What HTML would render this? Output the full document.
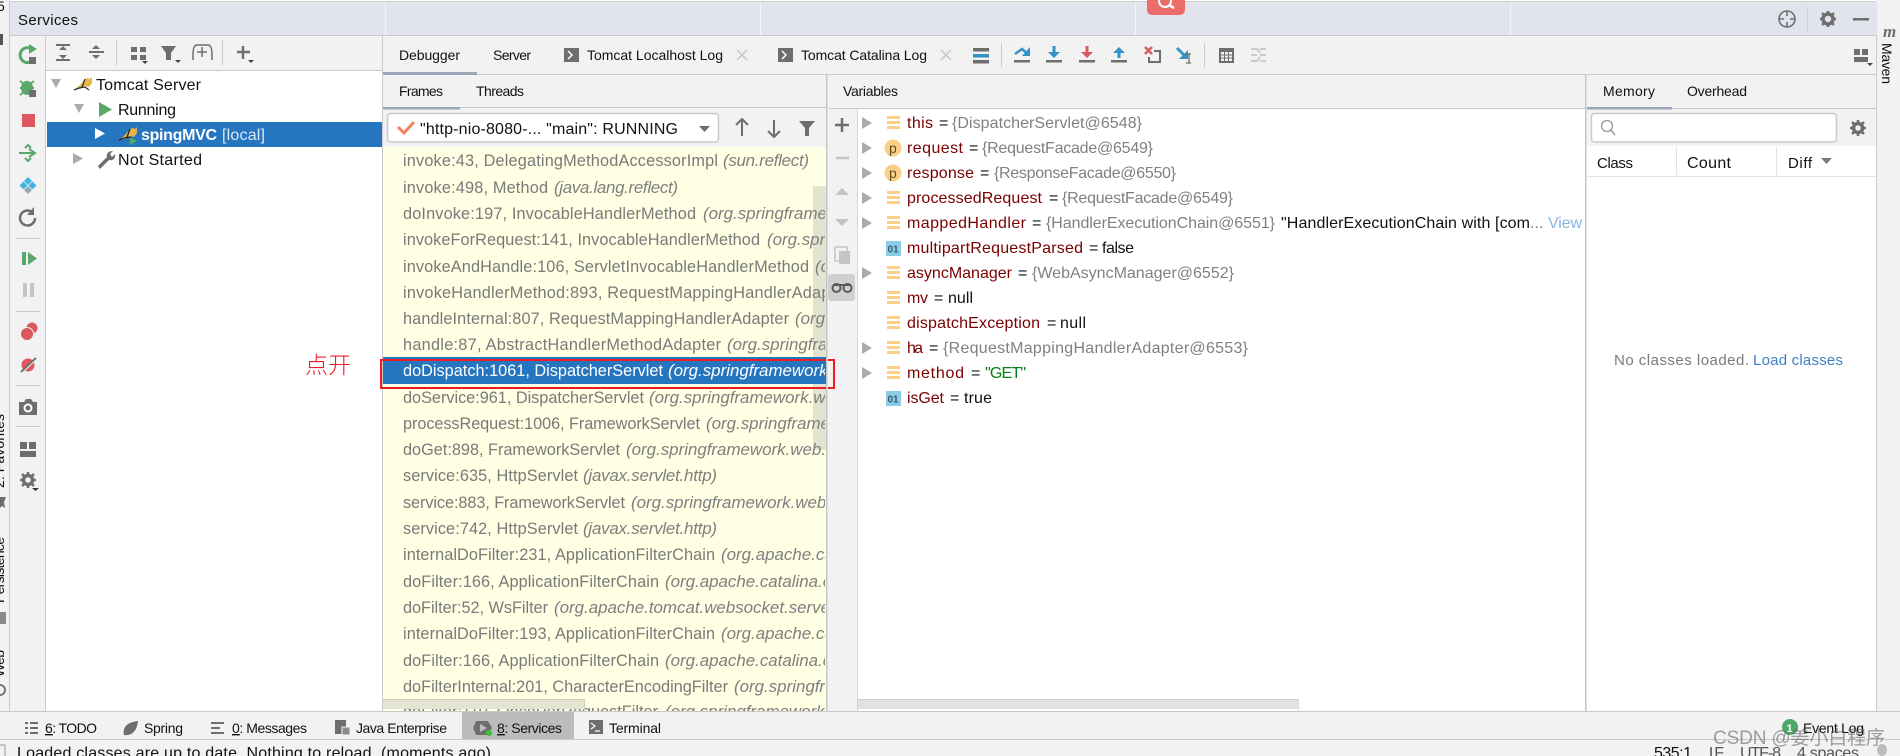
<!DOCTYPE html>
<html><head><meta charset="utf-8"><title>Services</title>
<style>
html,body{margin:0;padding:0;width:1900px;height:756px;overflow:hidden;background:#f2f2f2}
svg{display:block;filter:blur(.3px)}
text{font-family:"Liberation Sans","Noto Sans CJK SC",sans-serif;white-space:pre}
.ui{font-size:14px;fill:#111}
.t{font-size:16px;fill:#111}
.f{font-size:16.3px;fill:#7a7a7a}
.i{font-size:16.9px;fill:#7f7f7f;font-style:italic}
.n{font-size:16px;fill:#7a0000}
.g{font-size:16px;fill:#808080}
.k{font-size:16px;fill:#111}
</style></head><body>
<svg width="1900" height="756" viewBox="0 0 1900 756" xmlns="http://www.w3.org/2000/svg">
<defs>
<clipPath id="fc"><rect x="383" y="147" width="442" height="564"/></clipPath>
<clipPath id="ls"><rect x="0" y="0" width="9" height="756"/></clipPath>
</defs>
<rect width="1900" height="756" fill="#f2f2f2"/>
<!-- top -->
<rect x="10" y="0" width="1867" height="1" fill="#fff"/>
<rect x="10" y="1" width="1867" height="1" fill="#cfcfcf"/>
<rect x="10" y="2" width="1867" height="33" fill="#e1e4ec"/>
<rect x="385" y="2" width="1" height="33" fill="#f4f5f8"/>
<rect x="760" y="2" width="1" height="33" fill="#f4f5f8"/>
<rect x="1135" y="2" width="1" height="33" fill="#f4f5f8"/>
<rect x="1510" y="2" width="1" height="33" fill="#f4f5f8"/>
<rect x="10" y="35" width="1867" height="1" fill="#c9c9c9"/>
<text class="ui" x="18" y="25" textLength="60" style="font-size:15px">Services</text>
<path d="M1147 0h38v10a5 5 0 0 1-5 5h-28a5 5 0 0 1-5-5z" fill="#ec6b6b"/>
<circle cx="1165" cy="1" r="6" fill="none" stroke="#fff" stroke-width="2"/><path d="M1169 5l5 3" stroke="#fff" stroke-width="2.5"/>
<!-- top right icons -->
<circle cx="1787" cy="19" r="8" fill="none" stroke="#6e6e6e" stroke-width="1.6"/><path d="M1787 11v5M1787 22v5M1779 19h5M1790 19h5" stroke="#6e6e6e" stroke-width="1.6"/>
<rect x="1807" y="7" width="1" height="24" fill="#d0d3da"/>
<circle cx="1828" cy="19" r="5" fill="none" stroke="#6e6e6e" stroke-width="3.5"/><path d="M1828 11v3M1828 24v3M1820 19h3M1833 19h3M1822 13l2 2M1832 23l2 2M1834 13l-2 2M1824 23l-2 2" stroke="#6e6e6e" stroke-width="2.5"/>
<rect x="1853" y="18" width="16" height="2.5" fill="#6e6e6e"/>
<!-- left strip -->
<rect x="9" y="0" width="1" height="711" fill="#c9c9c9"/>
<g clip-path="url(#ls)" font-size="14" fill="#111">
<text class="ui" transform="translate(4 488) rotate(-90)" textLength="74">2: Favorites</text>
<text class="ui" transform="translate(4 603) rotate(-90)" textLength="66">Persistence</text>
<text class="ui" transform="translate(4 677) rotate(-90)" textLength="27">Web</text>
<text class="ui" x="-3" y="11">5</text>
<path d="M0 497h6l-2 5 1 6-3-2-2 2z" fill="#6e6e6e"/>
<rect x="0" y="612" width="6" height="12" fill="#8a8a8a"/>
<circle cx="0" cy="690" r="5" fill="none" stroke="#777" stroke-width="2"/>
<rect x="0" y="34" width="3" height="11" fill="#555"/>
</g>
<!-- tool strip -->
<rect x="45" y="36" width="1" height="675" fill="#c9c9c9"/>
<path d="M34 59a7.500 7.500 0 1 1-4-11" fill="none" stroke="#59a869" stroke-width="3"/>
<path d="M29 44l8 5-8 5z" fill="#59a869"/><rect x="29" y="57" width="7" height="7" fill="#6e6e6e"/>
<g fill="#59a869"><ellipse cx="27" cy="88" rx="6" ry="7"/><path d="M20 81l4 3M34 81l-4 3M20 88h5M34 88h-5M20 95l4-3" stroke="#59a869" stroke-width="2"/></g><rect x="29" y="90" width="7" height="7" fill="#6e6e6e"/>
<rect x="22" y="114" width="13" height="13" fill="#db5860"/>
<path d="M19 153h14M29 149l6 4-6 4" fill="none" stroke="#59a869" stroke-width="2"/><path d="M25 148l3-3 3 3M25 158l3 3 3-3" fill="none" stroke="#59a869" stroke-width="2"/>
<path d="M28 177l4 4-4 4-4-4zM23.500 181.500l4 4-4 4-4-4zM32.500 181.500l4 4-4 4-4-4z" fill="#40b6e0"/><path d="M28 186l4 4-4 4-4-4z" fill="#9aa7b0"/>
<path d="M35 218a7.500 7.500 0 1 1-3-6" fill="none" stroke="#6e6e6e" stroke-width="2.500"/><path d="M34 207v8h-7z" fill="#6e6e6e"/>
<rect x="16" y="238" width="24" height="1" fill="#c9c9c9"/>
<rect x="22" y="252" width="4" height="13" fill="#59a869"/><path d="M28 252l9 6.500-9 6.500z" fill="#59a869"/>
<rect x="23" y="283" width="4" height="14" fill="#c4c4c4"/><rect x="30" y="283" width="4" height="14" fill="#c4c4c4"/>
<rect x="16" y="311" width="24" height="1" fill="#c9c9c9"/>
<circle cx="32" cy="328" r="5.500" fill="#db5860"/><circle cx="27" cy="334" r="7" fill="#f2f2f2"/><circle cx="27" cy="334" r="6" fill="#db5860"/>
<circle cx="28" cy="365" r="6.500" fill="#db5860"/><path d="M21 372l15-14" stroke="#6e6e6e" stroke-width="2"/><path d="M23 372l15-14" stroke="#f2f2f2" stroke-width="1"/>
<rect x="16" y="385" width="24" height="1" fill="#c9c9c9"/>
<path d="M19 402h5l2-3h5l2 3h4v13h-18z" fill="#6e6e6e"/><circle cx="28" cy="408" r="3.500" fill="none" stroke="#fff" stroke-width="2"/>
<rect x="16" y="426" width="24" height="1" fill="#c9c9c9"/>
<path d="M20 442h7v7h-7zM29 442h7v7h-7zM20 451h16v6h-16z" fill="#6e6e6e"/>
<circle cx="28" cy="480" r="4.500" fill="none" stroke="#6e6e6e" stroke-width="3.500"/><path d="M28 472v3M28 485v3M20 480h3M33 480h3M22 474l2 2M32 484l2 2M34 474l-2 2M24 484l-2 2" stroke="#6e6e6e" stroke-width="2.500"/><path d="M32 488h7l-3.500 3z" fill="#333"/>
<!-- tree pane -->
<rect x="46" y="70" width="336" height="641" fill="#fff"/>
<rect x="46" y="70" width="336" height="1" fill="#c9c9c9"/>
<path d="M56 45h14M56 60h14" stroke="#6e6e6e" stroke-width="2"/><path d="M59 50l4-4 4 4zM59 55l4 4 4-4z" fill="#6e6e6e"/>
<path d="M89 52h15" stroke="#6e6e6e" stroke-width="2"/><path d="M92 49l4-4 4 4zM92 55l4 4 4-4z" fill="#6e6e6e"/>
<rect x="116" y="40" width="1" height="25" fill="#c9c9c9"/>
<path d="M131 47h6v5h-6zM140 47h6v5h-6zM131 55h6v5h-6zM140 55h6v5h-6z" fill="#6e6e6e"/><path d="M142 61h6l-3 3z" fill="#444"/>
<path d="M161 46h15l-5 7v7h-5v-7z" fill="#6e6e6e"/><path d="M175 60h6l-3 3z" fill="#444"/>
<path d="M193 60v-5q0-10 4-10h11q4 0 4 10v5M202 47v10M197 52h10" fill="none" stroke="#6e6e6e" stroke-width="1.500"/>
<rect x="222" y="40" width="1" height="25" fill="#c9c9c9"/>
<path d="M243 46v13M237 52h13" stroke="#6e6e6e" stroke-width="2.500"/><path d="M248 60h6l-3 3z" fill="#444"/>
<!-- tree rows -->
<rect x="47" y="122" width="335" height="25" fill="#2675bf"/>
<path d="M51 79h10l-5 9z" fill="#aaa"/><path d="M74 104h10l-5 9z" fill="#aaa"/><path d="M95 128l10 5.500-10 5.500z" fill="#fff"/><path d="M73 153l10 5.500-10 5.500z" fill="#aaa"/>
<path d="M74 90l6-5 5-6 3-1 2 1 2-2 0 6-3 4-4-1-5 3z" fill="#e8b54a"/><path d="M74 90l5-2 6-1 4 3M82 87l3-8" fill="none" stroke="#333" stroke-width="1.300"/>
<text class="t" x="96" y="90" textLength="105">Tomcat Server</text>
<path d="M99 102l13 7.500-13 7.500z" fill="#59a869"/>
<text class="t" x="118" y="115" textLength="58">Running</text>
<path d="M119 140l6-5 5-6 3-1 2 1 2-2 0 6-3 4-4-1-5 3z" fill="#e8b54a"/><path d="M119 140l5-2 6-1 4 3M127 137l3-8" fill="none" stroke="#222" stroke-width="1.300"/><path d="M130 137l7 4-7 4z" fill="#59a869"/>
<text x="141" y="140" font-size="16" font-weight="700" fill="#fff" textLength="76">spingMVC</text>
<text x="222" y="140" font-size="16" fill="#dbe8f6" textLength="43">[local]</text>
<path d="M98 166l9-9c-1-3 1-6 6-6l-3 3 2 3 3-3c1 5-3 7-6 6l-9 9z" fill="#6e6e6e"/>
<text class="t" x="118" y="165" textLength="84">Not Started</text>
<!-- center tabs -->
<rect x="382" y="36" width="1" height="675" fill="#c9c9c9"/>
<rect x="383" y="74" width="1494" height="1" fill="#c9c9c9"/>
<rect x="383" y="72" width="94" height="3" fill="#9aa7b8"/>
<text class="ui" x="399" y="60" textLength="61">Debugger</text>
<text class="ui" x="493" y="60" textLength="38">Server</text>
<rect x="564" y="48" width="15" height="14" fill="#6e6e6e"/><path d="M568 51l4 4-4 4" fill="none" stroke="#fff" stroke-width="1.500"/>
<text class="ui" x="587" y="60" textLength="136">Tomcat Localhost Log</text>
<path d="M737 50l10 10M747 50l-10 10" stroke="#c4c4c4" stroke-width="1.300"/>
<rect x="778" y="48" width="15" height="14" fill="#6e6e6e"/><path d="M782 51l4 4-4 4" fill="none" stroke="#fff" stroke-width="1.500"/>
<text class="ui" x="801" y="60" textLength="126">Tomcat Catalina Log</text>
<path d="M941 50l10 10M951 50l-10 10" stroke="#c4c4c4" stroke-width="1.300"/>
<rect x="973" y="48" width="16" height="3.500" fill="#6e6e6e"/><rect x="973" y="54" width="16" height="3.500" fill="#3592c4"/><rect x="973" y="60" width="16" height="3.500" fill="#6e6e6e"/>
<rect x="1001" y="43" width="1" height="24" fill="#c9c9c9"/>
<!-- step icons -->
<path d="M1015 54l7-5 6 5" fill="none" stroke="#3592c4" stroke-width="2.500"/><path d="M1030 47v9h-8z" fill="#3592c4"/><rect x="1014" y="60" width="16" height="2.500" fill="#6e6e6e"/>
<path d="M1054 46v9" stroke="#3592c4" stroke-width="3"/><path d="M1048 52h12l-6 6z" fill="#3592c4"/><rect x="1046" y="60" width="16" height="2.500" fill="#6e6e6e"/>
<path d="M1087 46v9" stroke="#db5860" stroke-width="3"/><path d="M1081 52h12l-6 6z" fill="#db5860"/><rect x="1079" y="60" width="16" height="2.500" fill="#6e6e6e"/>
<path d="M1119 58v-8" stroke="#3592c4" stroke-width="3"/><path d="M1113 53h12l-6-6z" fill="#3592c4"/><rect x="1111" y="60" width="16" height="2.500" fill="#6e6e6e"/>
<path d="M1145 47l7 7M1152 47l-7 7" stroke="#db5860" stroke-width="2.500"/><path d="M1154 51h6v11h-11v-5" fill="none" stroke="#6e6e6e" stroke-width="2"/>
<path d="M1177 48l9 9" stroke="#3592c4" stroke-width="3"/><path d="M1188 50v9h-9z" fill="#3592c4"/><path d="M1186 54h5M1186 63h5M1189 54v9" stroke="#6e6e6e" stroke-width="1.300" fill="none"/>
<rect x="1204" y="43" width="1" height="24" fill="#c9c9c9"/>
<rect x="1219" y="48" width="15" height="15" fill="#6e6e6e"/><path d="M1221 52h11v9h-11z" fill="#f2f2f2"/><path d="M1221 55h11M1221 58h11M1224.500 52v9M1228.500 52v9" stroke="#6e6e6e"/>
<path d="M1251 49h6l3 4M1251 61h6l3-4M1251 55h6M1260 49h6M1260 55h6M1260 61h6" fill="none" stroke="#c4c4c4" stroke-width="1.800"/>
<path d="M1854 49h6v6h-6zM1862 49h6v6h-6zM1854 57h14v5h-14z" fill="#6e6e6e"/><path d="M1867 63h6l-3 3z" fill="#444"/>
<!-- frames header -->
<rect x="383" y="107" width="443" height="1" fill="#c9c9c9"/>
<rect x="383" y="107" width="77" height="2.500" fill="#9aa7b8"/>
<text class="ui" x="399" y="96" textLength="44">Frames</text>
<text class="ui" x="476" y="96" textLength="48">Threads</text>
<rect x="387.500" y="113.500" width="331" height="28.500" rx="3" fill="#fff" stroke="#c9c9c9" stroke-width="1.500"/>
<path d="M398 127l6 6 10-11" fill="none" stroke="#f2855a" stroke-width="3"/>
<text class="t" x="420" y="134" textLength="258">"http-nio-8080-... "main": RUNNING</text>
<path d="M699 126h11l-5.500 6z" fill="#6e6e6e"/>
<path d="M742 136v-16M736 125l6-6 6 6" fill="none" stroke="#6e6e6e" stroke-width="2"/>
<path d="M774 120v16M768 131l6 6 6-6" fill="none" stroke="#6e6e6e" stroke-width="2"/>
<path d="M799 121h16l-6 7v8h-4v-8z" fill="#6e6e6e"/>
<!-- frames list -->
<rect x="383" y="147" width="443" height="564" fill="#ffffe4"/>
<rect x="813" y="186" width="13" height="264" fill="#e3e3d0"/>
<rect x="383" y="357" width="443" height="27" fill="#2675bf"/>
<g clip-path="url(#fc)">
<text class="f" x="403" y="166" textLength="315">invoke:43, DelegatingMethodAccessorImpl</text><text class="i" x="723" y="166" textLength="86">(sun.reflect)</text>
<text class="f" x="403" y="193" textLength="145">invoke:498, Method</text><text class="i" x="554" y="193" textLength="124">(java.lang.reflect)</text>
<text class="f" x="403" y="219" textLength="293">doInvoke:197, InvocableHandlerMethod</text><text class="i" x="703" y="219">(org.springframework.web.method.support)</text>
<text class="f" x="403" y="245" textLength="357">invokeForRequest:141, InvocableHandlerMethod</text><text class="i" x="767" y="245">(org.springframework.web.method.support)</text>
<text class="f" x="403" y="272" textLength="406">invokeAndHandle:106, ServletInvocableHandlerMethod</text><text class="i" x="815" y="272">(org.springframework)</text>
<text class="f" x="403" y="298" textLength="447">invokeHandlerMethod:893, RequestMappingHandlerAdapter</text>
<text class="f" x="403" y="324" textLength="386">handleInternal:807, RequestMappingHandlerAdapter</text><text class="i" x="795" y="324">(org.springframework)</text>
<text class="f" x="403" y="350" textLength="318">handle:87, AbstractHandlerMethodAdapter</text><text class="i" x="727" y="350">(org.springframework.web)</text>
<text class="f" x="403" y="376" textLength="260" style="fill:#fff">doDispatch:1061, DispatcherServlet</text><text class="i" x="668" y="376" style="fill:#fff">(org.springframework.web.servlet)</text>
<text class="f" x="403" y="403" textLength="241">doService:961, DispatcherServlet</text><text class="i" x="649" y="403">(org.springframework.web.servlet)</text>
<text class="f" x="403" y="429" textLength="297">processRequest:1006, FrameworkServlet</text><text class="i" x="706" y="429">(org.springframework.web.servlet)</text>
<text class="f" x="403" y="455" textLength="217">doGet:898, FrameworkServlet</text><text class="i" x="626" y="455">(org.springframework.web.servlet)</text>
<text class="f" x="403" y="481" textLength="175">service:635, HttpServlet</text><text class="i" x="583" y="481" textLength="134">(javax.servlet.http)</text>
<text class="f" x="403" y="508" textLength="222">service:883, FrameworkServlet</text><text class="i" x="631" y="508">(org.springframework.web.servlet)</text>
<text class="f" x="403" y="534" textLength="175">service:742, HttpServlet</text><text class="i" x="583" y="534" textLength="134">(javax.servlet.http)</text>
<text class="f" x="403" y="560" textLength="312">internalDoFilter:231, ApplicationFilterChain</text><text class="i" x="721" y="560">(org.apache.catalina.core)</text>
<text class="f" x="403" y="587" textLength="256">doFilter:166, ApplicationFilterChain</text><text class="i" x="665" y="587">(org.apache.catalina.core)</text>
<text class="f" x="403" y="613" textLength="145">doFilter:52, WsFilter</text><text class="i" x="554" y="613">(org.apache.tomcat.websocket.server)</text>
<text class="f" x="403" y="639" textLength="312">internalDoFilter:193, ApplicationFilterChain</text><text class="i" x="721" y="639">(org.apache.catalina.core)</text>
<text class="f" x="403" y="666" textLength="256">doFilter:166, ApplicationFilterChain</text><text class="i" x="665" y="666">(org.apache.catalina.core)</text>
<text class="f" x="403" y="692" textLength="325">doFilterInternal:201, CharacterEncodingFilter</text><text class="i" x="734" y="692">(org.springframework.web)</text>
<text class="f" x="403" y="717" textLength="255">doFilter:110, OncePerRequestFilter</text><text class="i" x="665" y="717">(org.springframework.web)</text>
</g>
<rect x="383" y="699" width="202" height="10" fill="#e4e4d2"/><rect x="383" y="699" width="202" height="1" fill="#d0d0c0"/><rect x="584" y="699" width="1" height="12" fill="#d0d0c0"/>
<!-- red box -->
<rect x="381" y="360" width="453" height="28" fill="none" stroke="#ed1c24" stroke-width="2"/>
<text x="305" y="373" font-size="23" fill="#ed1c24" style='font-family:"Noto Sans CJK SC",sans-serif;font-weight:300'>点开</text>
<!-- side toolbar -->
<rect x="826" y="75" width="1" height="636" fill="#c4c4c4"/><rect x="827" y="75" width="1" height="636" fill="#dedede"/>
<rect x="857" y="109" width="1" height="602" fill="#d4d4d4"/>
<rect x="828" y="108" width="1049" height="1" fill="#c9c9c9"/>
<text class="ui" x="843" y="96" textLength="55">Variables</text>
<path d="M842 118v14M835 125h14" stroke="#6e6e6e" stroke-width="2.500"/>
<path d="M836 158h13" stroke="#c4c4c4" stroke-width="2.500"/>
<path d="M835 195l7-7 7 7z" fill="#c4c4c4"/>
<path d="M835 219l7 7 7-7z" fill="#c4c4c4"/>
<path d="M835 247h12v14h-12z" fill="none" stroke="#c4c4c4" stroke-width="1.500"/><path d="M839 251h11v13h-11z" fill="#c4c4c4"/>
<rect x="828" y="274" width="27" height="27" rx="3" fill="#d0d0d0"/>
<circle cx="836.500" cy="288" r="4" fill="none" stroke="#5a5a5a" stroke-width="2"/><circle cx="847.500" cy="288" r="4" fill="none" stroke="#5a5a5a" stroke-width="2"/><path d="M833 285h18" stroke="#5a5a5a" stroke-width="2"/>
<!-- variables -->
<rect x="858" y="109" width="727" height="602" fill="#fff"/>
<g fill="#aaa">
<path d="M862 117l10 6-10 6z"/><path d="M862 142l10 6-10 6z"/><path d="M862 167l10 6-10 6z"/><path d="M862 192l10 6-10 6z"/><path d="M862 217l10 6-10 6z"/><path d="M862 267l10 6-10 6z"/><path d="M862 342l10 6-10 6z"/><path d="M862 367l10 6-10 6z"/>
</g>
<g fill="#fbcf85">
<path d="M887 116h13v3h-13zM887 121h13v3h-13zM887 126h13v3h-13z"/>
<path d="M887 191h13v3h-13zM887 196h13v3h-13zM887 201h13v3h-13z"/>
<path d="M887 216h13v3h-13zM887 221h13v3h-13zM887 226h13v3h-13z"/>
<path d="M887 266h13v3h-13zM887 271h13v3h-13zM887 276h13v3h-13z"/>
<path d="M887 291h13v3h-13zM887 296h13v3h-13zM887 301h13v3h-13z"/>
<path d="M887 316h13v3h-13zM887 321h13v3h-13zM887 326h13v3h-13z"/>
<path d="M887 341h13v3h-13zM887 346h13v3h-13zM887 351h13v3h-13z"/>
<path d="M887 366h13v3h-13zM887 371h13v3h-13zM887 376h13v3h-13z"/>
<circle cx="893" cy="148" r="8.500"/><circle cx="893" cy="173" r="8.500"/>
</g>
<text x="889" y="153" font-size="14" fill="#5c4d2a">p</text><text x="889" y="178" font-size="14" fill="#5c4d2a">p</text>
<rect x="886" y="241" width="15" height="15" fill="#8bcde8"/><text x="887.500" y="252.500" font-size="10" font-weight="700" fill="#3c5a66">01</text>
<rect x="886" y="391" width="15" height="15" fill="#8bcde8"/><text x="887.500" y="402.500" font-size="10" font-weight="700" fill="#3c5a66">01</text>

<text class="n" x="907" y="128" textLength="26">this</text><text class="k" x="939" y="128">=</text><text class="g" x="952" y="128" textLength="190">{DispatcherServlet@6548}</text>
<text class="n" x="907" y="153" textLength="56">request</text><text class="k" x="969" y="153">=</text><text class="g" x="982" y="153" textLength="171">{RequestFacade@6549}</text>
<text class="n" x="907" y="178" textLength="67">response</text><text class="k" x="980" y="178">=</text><text class="g" x="994" y="178" textLength="182">{ResponseFacade@6550}</text>
<text class="n" x="907" y="203" textLength="135">processedRequest</text><text class="k" x="1049" y="203">=</text><text class="g" x="1062" y="203" textLength="171">{RequestFacade@6549}</text>
<text class="n" x="907" y="228" textLength="119">mappedHandler</text><text class="k" x="1032" y="228">=</text><text class="g" x="1046" y="228" textLength="229">{HandlerExecutionChain@6551}</text>
<text class="k" x="1281" y="228" textLength="249">"HandlerExecutionChain with [com</text><text class="g" x="1530" y="228">...</text><text x="1548" y="228" font-size="16" fill="#8ab4e0" textLength="34">View</text>
<text class="n" x="907" y="253" textLength="176">multipartRequestParsed</text><text class="k" x="1089" y="253">=</text><text class="k" x="1102" y="253" textLength="32">false</text>
<text class="n" x="907" y="278" textLength="105">asyncManager</text><text class="k" x="1018" y="278">=</text><text class="g" x="1032" y="278" textLength="202">{WebAsyncManager@6552}</text>
<text class="n" x="907" y="303" textLength="21">mv</text><text class="k" x="934" y="303">=</text><text class="k" x="948" y="303" textLength="25">null</text>
<text class="n" x="907" y="328" textLength="133">dispatchException</text><text class="k" x="1047" y="328">=</text><text class="k" x="1060" y="328" textLength="26">null</text>
<text class="n" x="907" y="353" textLength="16">ha</text><text class="k" x="929" y="353">=</text><text class="g" x="943" y="353" textLength="305">{RequestMappingHandlerAdapter@6553}</text>
<text class="n" x="907" y="378" textLength="57">method</text><text class="k" x="971" y="378">=</text><text x="985" y="378" font-size="16" fill="#067d17" textLength="41">"GET"</text>
<text class="n" x="907" y="403" textLength="37">isGet</text><text class="k" x="950" y="403">=</text><text class="k" x="964" y="403" textLength="28">true</text>
<rect x="858" y="699" width="441" height="12" fill="#fff"/><rect x="858" y="700" width="440" height="9" fill="#e2e2e2"/><rect x="858" y="699" width="440" height="1" fill="#cfcfcf"/><rect x="1298" y="699" width="1" height="12" fill="#dcdcdc"/>
<!-- memory -->
<rect x="1585" y="75" width="1" height="636" fill="#c4c4c4"/><rect x="1586" y="75" width="1" height="636" fill="#dedede"/>
<rect x="1587" y="107" width="85" height="2.500" fill="#9aa7b8"/>
<text class="ui" x="1603" y="96" textLength="52">Memory</text>
<text class="ui" x="1687" y="96" textLength="60">Overhead</text>
<rect x="1591.500" y="113.500" width="245" height="28.500" rx="3" fill="#fff" stroke="#c9c9c9" stroke-width="1.500"/>
<circle cx="1607" cy="126" r="5.500" fill="none" stroke="#9a9a9a" stroke-width="1.300"/><path d="M1611 130l4 5" stroke="#9a9a9a" stroke-width="1.500"/>
<circle cx="1858" cy="128" r="4.500" fill="none" stroke="#6e6e6e" stroke-width="3.500"/><path d="M1858 120v3M1858 133v3M1850 128h3M1863 128h3M1852 122l2 2M1862 132l2 2M1864 122l-2 2M1854 132l-2 2" stroke="#6e6e6e" stroke-width="2.500"/>
<rect x="1587" y="146" width="289" height="565" fill="#fff"/>
<rect x="1676" y="147" width="1" height="28" fill="#e2e2e2"/><rect x="1776" y="147" width="1" height="28" fill="#e2e2e2"/>
<rect x="1587" y="176" width="289" height="1" fill="#e2e2e2"/>
<text class="ui" x="1597" y="168" textLength="36" style="font-size:15px">Class</text>
<text class="ui" x="1687" y="168" textLength="44" style="font-size:16px">Count</text>
<text class="ui" x="1788" y="168" textLength="24" style="font-size:15px">Diff</text>
<path d="M1821 158h11l-5.500 6z" fill="#7a7a7a"/>
<text x="1614" y="365" font-size="15" fill="#7a7a7a" textLength="135">No classes loaded.</text>
<text x="1753" y="365" font-size="15" fill="#3d7fc4" textLength="90">Load classes</text>
<!-- right strip -->
<rect x="1876" y="36" width="1" height="675" fill="#c9c9c9"/>
<text x="1883" y="37" font-size="17" font-weight="700" font-style="italic" fill="#6e6e6e" textLength="16" style='font-family:"Liberation Serif",serif'>m</text>
<text class="ui" transform="translate(1882 43) rotate(90)" textLength="41">Maven</text>
<!-- bottom -->
<rect x="0" y="711" width="1900" height="1" fill="#c9c9c9"/>
<rect x="0" y="739" width="1900" height="1" fill="#c9c9c9"/>
<rect x="462" y="712" width="112" height="27" fill="#bcbcbc"/>
<path d="M25 722h3v2h-3zM25 727h3v2h-3zM25 732h3v2h-3zM30 722h8v2h-8zM30 727h8v2h-8zM30 732h8v2h-8z" fill="#6e6e6e"/>
<text class="ui" x="45" y="733" textLength="52"><tspan text-decoration="underline">6</tspan>: TODO</text>
<path d="M124 735c-2-8 4-13 14-14-1 9-5 15-14 14z" fill="#6e6e6e"/>
<text class="ui" x="144" y="733" textLength="39">Spring</text>
<path d="M211 722h13v2h-13zM211 727h9v2h-9zM211 732h13v2h-13z" fill="#6e6e6e"/>
<text class="ui" x="232" y="733" textLength="75"><tspan text-decoration="underline">0</tspan>: Messages</text>
<rect x="335" y="720" width="11" height="14" fill="#6e6e6e"/><rect x="342" y="727" width="8" height="8" fill="#8a8a8a" stroke="#f2f2f2"/>
<text class="ui" x="356" y="733" textLength="91">Java Enterprise</text>
<path d="M476 721h12l4 7-4 7h-12l-3-7z" fill="#6e6e6e"/><path d="M480 724l7 4-7 4z" fill="#bcbcbc"/><circle cx="489" cy="733" r="3" fill="#3cc33c"/>
<text class="ui" x="497" y="733" textLength="65"><tspan text-decoration="underline">8</tspan>: Services</text>
<rect x="589" y="720" width="14" height="14" fill="#6e6e6e"/><path d="M591 723l4 3-4 3M595 731h5" fill="none" stroke="#fff" stroke-width="1.200"/>
<text class="ui" x="609" y="733" textLength="52">Terminal</text>
<text class="ui" x="1803" y="733" textLength="61" style="font-size:14px">Event Log</text>
<circle cx="1790" cy="727" r="8" fill="#4da868"/><text x="1786.500" y="732" font-size="11" font-weight="700" fill="#fff">1</text>
<path d="M0 745h5v11" fill="none" stroke="#aaa" stroke-width="1.200"/>
<text class="t" x="17" y="758" textLength="474">Loaded classes are up to date. Nothing to reload. (moments ago)</text>
<text class="t" x="1654" y="758" textLength="38">535:1</text>
<text class="t" x="1709" y="758" textLength="15" style="fill:#555">LF</text>
<text class="t" x="1740" y="758" textLength="41" style="fill:#555">UTF-8</text>
<text class="t" x="1797" y="758" textLength="62" style="fill:#555">4 spaces</text>
<ellipse cx="1882" cy="750" rx="5" ry="6" fill="#bdbdbd"/>
<text x="1713" y="744" font-size="19" fill="#555" fill-opacity=".55" textLength="172">CSDN @姜小白程序</text>
</svg>
</body></html>
